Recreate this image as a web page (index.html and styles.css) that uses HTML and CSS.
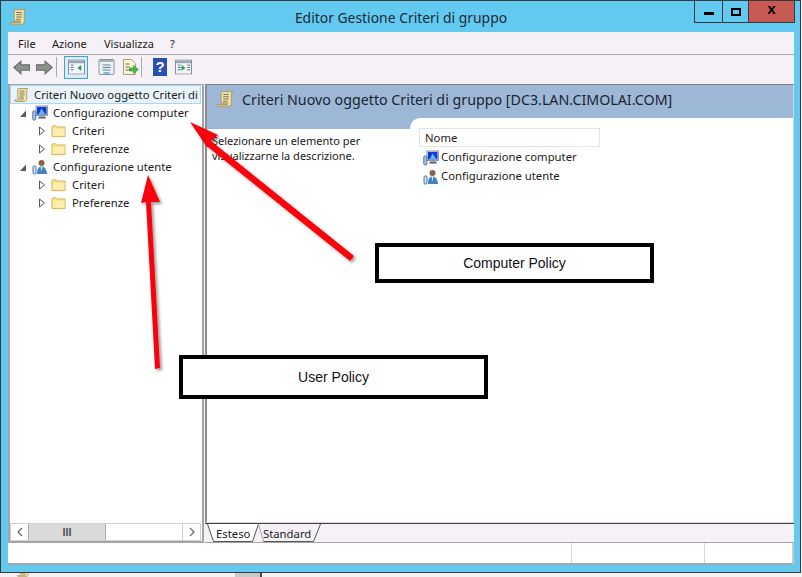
FILE: index.html
```html
<!DOCTYPE html>
<html lang="it">
<head>
<meta charset="utf-8">
<title>Editor Gestione Criteri di gruppo</title>
<link rel="stylesheet" href="styles.css">
</head>
<body>
<svg class="defs" width="0" height="0">
  <defs>
    <symbol id="scroll" viewBox="0 0 16 16">
      <path d="M4 1.500h10c-1 .8-1.300 1.600-1.300 2.500v8c0 1.200-.6 2.500-2 2.500H2c-1 0-1.500-.6-1.500-1.500h8.700c.3-.8.3-1 .3-1.500H3.700V3c0-.8-.2-1.200.3-1.500z" fill="#f4e3a8" stroke="#b09a5c" stroke-width=".9"/>
      <path d="M5.500 4h5M5.500 6h5M5.500 8h5M5.500 10h4" stroke="#77735f" stroke-width=".9"/>
    </symbol>
    <symbol id="folder" viewBox="0 0 16 14">
      <path d="M1 2.500c0-.6.4-1 1-1h3.500l1 1.200H15V13H1z" fill="#f8e08d" stroke="#d3b45c"/>
      <path d="M2 4.500h12.200V12H2z" fill="#fdeeb0"/>
    </symbol>
    <symbol id="computer" viewBox="0 0 16 16">
      <rect x="4" y="1" width="11.500" height="9.500" fill="#d9dee6" stroke="#77808e" stroke-width=".8"/>
      <rect x="5" y="2" width="9.500" height="7.500" fill="#0f3cd0"/>
      <path d="M6.500 9.500l3-6 4 6z" fill="#6fb2f4"/>
      <path d="M7 11.500h6l1 2H6z" fill="#55606e"/>
      <rect x=".8" y="6" width="3" height="9" rx="1" fill="#b4c3d8" stroke="#3e6da3" stroke-width=".9"/>
    </symbol>
    <symbol id="user" viewBox="0 0 16 16">
      <circle cx="9.500" cy="4" r="3" fill="#8a6244"/>
      <path d="M5 15c0-5 1.500-7.500 4.500-7.500s5 2.500 5.500 7.500z" fill="#3f82c4"/>
      <path d="M8.500 7.500h2l-1 5z" fill="#e8eef6"/>
      <rect x="1" y="7" width="3" height="8" rx="1" fill="#d6e0ec" stroke="#3e6da3" stroke-width=".9"/>
    </symbol>
    <symbol id="open" viewBox="0 0 8 10"><path d="M1 9h6V2.500z" fill="#595959"/></symbol>
    <symbol id="closed" viewBox="0 0 8 10"><path d="M1.500 1l5 4-5 4z" fill="#fff" stroke="#555"/></symbol>
    <symbol id="panel" viewBox="0 0 18 16">
      <rect x=".5" y=".5" width="17" height="15" fill="#f3f5f7" stroke="#7f8b96"/>
      <rect x="1" y="1" width="16" height="3" fill="#9aa8b6"/>
      <path d="M3 6h3M3 8.500h3M3 11h3" stroke="#4c6a88"/>
    </symbol>
  </defs>
</svg>

<div class="page">
  <main class="window">
    <header class="titlebar">
      <svg class="app-icon"><use href="#scroll"/></svg>
      <h1 class="title">Editor Gestione Criteri di gruppo</h1>
      <div class="controls">
        <span class="ctl ctl-min"><i></i></span>
        <span class="ctl ctl-max"><i></i></span>
        <span class="ctl ctl-close">x</span>
      </div>
    </header>

    <div class="client">
      <nav class="menubar">
        <span class="menu-file">File</span>
        <span class="menu-azione">Azione</span>
        <span class="menu-vis">Visualizza</span>
        <span class="menu-help">?</span>
      </nav>

      <div class="toolbar">
        <svg class="tool tool-nav" viewBox="0 0 16 14"><path d="M.8 7L7.500 1v3.500H15.500v5H7.500V13z" fill="#8d918c" stroke="#6a6e6a"/></svg>
        <svg class="tool tool-nav" viewBox="0 0 16 14"><path d="M15.200 7L8.500 1v3.500H.5v5h8V13z" fill="#8d918c" stroke="#6a6e6a"/></svg>
        <span class="tool-sep"></span>
        <span class="tool-active">
          <svg class="tool-icon" viewBox="0 0 18 16"><use href="#panel"/><path d="M14 6v6l-4-3z" fill="#1aa052"/></svg>
        </span>
        <svg class="tool-icon tool-list" viewBox="0 0 16 16">
          <rect x=".5" y=".5" width="15" height="15" rx="1" fill="#eef2f5" stroke="#8a949c"/>
          <rect x="1" y="1" width="14" height="2" fill="#a8b2bb"/>
          <path d="M4 6h8M4 8.500h8M4 11h8" stroke="#5d7f9d"/>
          <path d="M5 14h6" stroke="#44aee0" stroke-width="1.500"/>
        </svg>
        <svg class="tool-icon tool-export" viewBox="0 0 17 16">
          <path d="M1.500.5h8l4 4v11h-12z" fill="#fbf5d6" stroke="#a39f86"/>
          <path d="M3.500 5h4M3.500 8h4M3.500 11h4" stroke="#6a6a60"/>
          <path d="M7.500 9h4V6.500l5 4-5 4V12h-4z" fill="#4cb848" stroke="#2f8a2e" stroke-width=".6"/>
        </svg>
        <span class="tool-sep tool-sep-2"></span>
        <span class="tool-help">?</span>
        <svg class="tool-icon tool-last" viewBox="0 0 18 16"><use href="#panel"/><path d="M7 6v6l4-3z" fill="#1aa052"/><path d="M13 6h3M13 8.500h3M13 11h3" stroke="#4c6a88"/></svg>
      </div>

      <div class="panes">
        <aside class="tree-pane">
          <ul class="tree">
            <li class="node node-root"><svg class="ico16"><use href="#scroll"/></svg><span class="root-label">Criteri Nuovo oggetto Criteri di</span></li>
            <li class="node lvl1"><svg class="tw"><use href="#open"/></svg><svg class="ico16"><use href="#computer"/></svg><span>Configurazione computer</span></li>
            <li class="node lvl2"><svg class="tw"><use href="#closed"/></svg><svg class="ico-f"><use href="#folder"/></svg><span>Criteri</span></li>
            <li class="node lvl2"><svg class="tw"><use href="#closed"/></svg><svg class="ico-f"><use href="#folder"/></svg><span>Preferenze</span></li>
            <li class="node lvl1"><svg class="tw"><use href="#open"/></svg><svg class="ico16"><use href="#user"/></svg><span>Configurazione utente</span></li>
            <li class="node lvl2"><svg class="tw"><use href="#closed"/></svg><svg class="ico-f"><use href="#folder"/></svg><span>Criteri</span></li>
            <li class="node lvl2"><svg class="tw"><use href="#closed"/></svg><svg class="ico-f"><use href="#folder"/></svg><span>Preferenze</span></li>
          </ul>
          <div class="hscroll">
            <span class="sb-btn"><svg class="chev" viewBox="0 0 8 10"><path d="M6 1L2 5l4 4" fill="none" stroke="#666" stroke-width="1.200"/></svg></span>
            <span class="sb-thumb">III</span>
            <span class="sb-track"></span>
            <span class="sb-btn"><svg class="chev" viewBox="0 0 8 10"><path d="M2 1l4 4-4 4" fill="none" stroke="#666" stroke-width="1.200"/></svg></span>
          </div>
        </aside>

        <section class="detail-col">
          <div class="detail">
            <div class="detail-head">
              <svg class="ico-head"><use href="#scroll"/></svg>
              <h2 class="head-title">Criteri Nuovo oggetto Criteri di gruppo [DC3.LAN.CIMOLAI.COM]</h2>
            </div>
            <div class="detail-body">
              <p class="desc">Selezionare un elemento per<br>visualizzarne la descrizione.</p>
              <div class="list">
                <div class="col-head">Nome</div>
                <div class="list-row"><svg class="ico16"><use href="#computer"/></svg><span>Configurazione computer</span></div>
                <div class="list-row"><svg class="ico16"><use href="#user"/></svg><span>Configurazione utente</span></div>
              </div>
            </div>
          </div>
          <div class="tabs">
            <svg class="tab-art" viewBox="0 0 130 19" width="130" height="19">
              <path d="M2.500 0l6 17.500h39L53.500 0" fill="#fff" stroke="#555"/>
              <path d="M53.500 0l5 17.500" fill="none" stroke="#aaa"/>
              <path d="M58.500 17.500h50L115.500 0" fill="none" stroke="#555"/>
            </svg>
            <span class="tab tab-1">Esteso</span>
            <span class="tab tab-2">Standard</span>
          </div>
        </section>
      </div>

      <footer class="status">
        <span class="st st-1"></span>
        <span class="st st-2"></span>
        <span class="st st-3"></span>
      </footer>
    </div>
  </main>

  <div class="under">
    <svg class="under-a"><use href="#scroll"/></svg>
    <span class="under-b"></span>
  </div>

  <svg class="arrows" width="802" height="577" viewBox="0 0 802 577">
    <defs><filter id="sh" x="-20%" y="-20%" width="140%" height="140%"><feDropShadow dx="2" dy="2" stdDeviation="1.500" flood-color="#000" flood-opacity=".4"/></filter></defs>
    <g filter="url(#sh)" fill="#fb0007">
      <path d="M190 122L218 135 211 141 354 256 350 261 208 147 207 147z"/>
      <path d="M148 175L160 202 151 202 160 368 155 369 146 202 141 203z"/>
    </g>
  </svg>
  <div class="callout callout-computer">Computer Policy</div>
  <div class="callout callout-user">User Policy</div>
</div>
</body>
</html>
```
FILE: styles.css
```css
* { box-sizing: border-box; }
html, body { margin: 0; padding: 0; background: #f4f1f4; }
body { width: 802px; height: 577px; overflow: hidden; font-family: "Noto Sans", sans-serif; font-size: 11.3px; color: #1a1a1a; }
.defs { position: absolute; }
ul { list-style: none; margin: 0; padding: 0; }
h1, h2, p { margin: 0; font-weight: 400; }

.page { position: relative; width: 802px; height: 577px; display: flex; flex-direction: column; }
.window { width: 801px; height: 573px; background: #62caf0; border: 1px solid #3a3a3a; padding: 0 6px 7px 7px; display: flex; flex-direction: column; flex: none; }

.titlebar { height: 31px; flex: none; position: relative; display: flex; align-items: center; justify-content: center; }
.app-icon { position: absolute; left: 2px; top: 7px; width: 18px; height: 18px; }
.title { font-size: 13.900px; color: #1d2b36; position: relative; top: 1px; }
.controls { position: absolute; top: 0; right: -1px; display: flex; height: 22px; border: 1px solid #3a3a3a; border-top: 0; }
.ctl { display: flex; align-items: center; justify-content: center; }
.ctl-min { width: 28px; border-right: 1px solid #3a3a3a; }
.ctl-min i { width: 10px; height: 3px; background: #000; margin-top: 4px; }
.ctl-max { width: 26px; border-right: 1px solid #3a3a3a; }
.ctl-max i { width: 10px; height: 8px; border: 2px solid #000; }
.ctl-close { width: 45px; background: #c75a52; font: 700 15px/1 "Liberation Mono", monospace; color: #000; padding-bottom: 3px; }

.client { flex: 1; background: #f6f1f6; display: flex; flex-direction: column; min-height: 0; }
.menubar { height: 23px; flex: none; display: flex; align-items: center; padding-left: 10px; border-bottom: 1px solid #aaa8aa; font-size: 11px; }
.menu-file { width: 34px; }
.menu-azione { width: 52px; }
.menu-vis { width: 66px; }

.toolbar { height: 29px; flex: none; display: flex; align-items: center; padding: 0 0 5px 5px; }
.tool-nav { width: 17px; height: 15px; margin-right: 6px; }
.tool-sep { width: 1px; height: 20px; background: #a9a9a9; margin: 0 7px 0 -3px; }
.tool-active { width: 24px; height: 23px; border: 1px solid #3aa3d8; background: #dcebf6; display: flex; align-items: center; justify-content: center; margin-right: 10px; }
.tool-icon { width: 17px; height: 16px; }
.tool-list { margin-right: 7px; }
.tool-sep-2 { margin: 0 11px 0 2px; }
.tool-help { width: 14px; height: 18px; background: #2a50b4; color: #fff; font: 700 15px/18px "Liberation Sans", sans-serif; text-align: center; margin-right: 8px; }

.panes { flex: 1; display: flex; min-height: 0; }
.tree-pane { width: 196px; flex: none; background: #fff; border: 1px solid #a4a4a6; border-left-width: 2px; border-right-width: 2px; display: flex; flex-direction: column; border-bottom-width: 2px; }
.tree { flex: 1; }
.node { height: 18px; display: flex; align-items: center; white-space: nowrap; }
.node span { margin-top: -2px; }
.node-root { height: 19px; background: #e8f3fb; border: 1px solid #a6d8f2; padding-left: 3px; margin-right: 1px; }
.node-root span { margin-top: 0; }
.root-label { margin-left: 4px; }
.lvl1 { padding-left: 9px; }
.lvl2 { padding-left: 28px; }
.tw { width: 8px; height: 10px; margin-right: 5px; flex: none; }
.ico16 { width: 16px; height: 16px; flex: none; }
.ico-f { width: 15px; height: 14px; margin-right: 6px; flex: none; }
.lvl1 .ico16 { margin-right: 5px; }

.hscroll { height: 18px; margin: 0 1px 0 0; display: flex; border: 1px solid #d0d0d0; align-items: stretch; }
.sb-btn { width: 17px; display: flex; align-items: center; justify-content: center; }
.chev { width: 8px; height: 10px; }
.sb-thumb { width: 78px; background: #dadada; border: 1px solid #aeaeae; border-width: 0 1px; font: 700 11px/16px "Liberation Sans", sans-serif; text-align: center; color: #555; }
.sb-track { flex: 1; border-right: 1px solid #d0d0d0; }

.detail-col { flex: 1; margin-left: 1px; display: flex; flex-direction: column; min-width: 0; }
.detail { flex: 1; background: #fff; border: 1px solid #8d8d8f; border-left-width: 2px; border-bottom: 1px solid #d6d6d6; display: flex; flex-direction: column; min-height: 0; border-right: 1px solid #d6d6d6; border-top-color: #7d7d80; }
.detail-head { height: 44px; flex: none; background: #9db8d6; display: flex; align-items: flex-start; padding: 5px 0 0 10px; }
.ico-head { width: 18px; height: 18px; margin-right: 7px; }
.head-title { font-size: 14.250px; color: #1a2430; line-height: 20px; white-space: nowrap; }
.detail-body { flex: 1; display: flex; min-height: 0; }
.desc { width: 203px; padding: 4px 0 0 5px; line-height: 15px; flex: none; font-size: 11px; }
.list { flex: 1; background: #fff; margin-top: -11px; border-top-left-radius: 10px; padding: 10px 0 0 9px; }
.col-head { width: 181px; height: 19px; border: 1px solid #e4e4e4; line-height: 17px; padding-left: 5px; }
.list-row { height: 19px; display: flex; align-items: center; gap: 2px; padding-left: 4px; }
.list-row span { margin-top: -2px; }
.col-head + .list-row { margin-top: 1px; }

.tabs { height: 20px; flex: none; position: relative; border-top: 1px solid #444; border-bottom: 1px solid #a4a4a6; display: flex; padding-left: 11px; align-items: center; }
.tab-art { position: absolute; left: 0; top: 0; }
.tab { position: relative; }
.tab-1 { width: 47px; }

.status { height: 22px; flex: none; background: #fff; display: flex; border-bottom: 2px solid #a6a6a6; border-right: 2px solid #c8c8c8; }
.st-1 { width: 564px; border-right: 1px solid #d8d8d8; }
.st-2 { width: 133px; border-right: 1px solid #d8d8d8; }
.st-3 { flex: 1; }

.under { flex: 1; display: flex; padding-left: 17px; overflow: hidden; }
.under-a { width: 14px; height: 14px; margin-top: -9px; }
.under-b { width: 27px; height: 4px; background: #c9c9c9; margin-left: 204px; border-right: 2px solid #444; }

.arrows { position: absolute; left: 0; top: 0; pointer-events: none; }
.callout { position: absolute; background: #fff; border: 4px solid #000; display: flex; align-items: center; justify-content: center; font-family: "Liberation Sans", sans-serif; font-size: 14px; color: #111; }
.callout-computer { left: 375px; top: 243px; width: 279px; height: 40px; }
.callout-user { left: 179px; top: 355px; width: 309px; height: 44px; }
```
